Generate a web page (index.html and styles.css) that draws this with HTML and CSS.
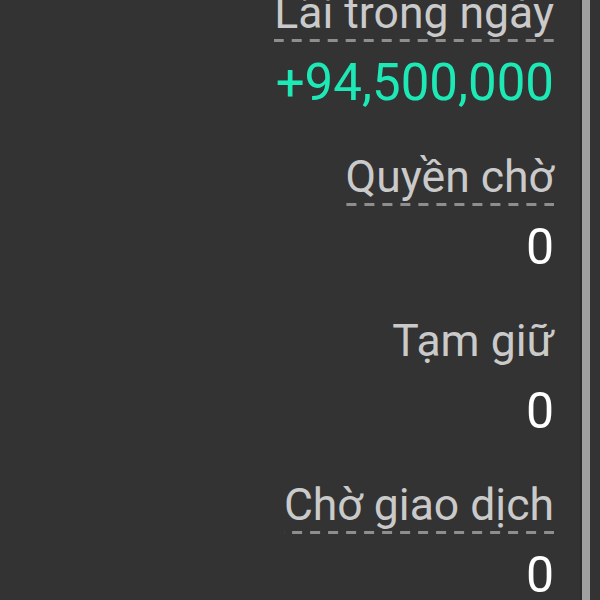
FILE: index.html
```html
<!DOCTYPE html>
<html lang="vi">
<head>
<meta charset="utf-8">
<title>Tài khoản</title>
<link rel="stylesheet" href="styles.css">
</head>
<body>
<div class="screen">
  <div class="list">
    <div class="item">
      <span class="label dashed">Lãi trong ngày</span>
      <div class="value up">+94,500,000</div>
    </div>
    <div class="item">
      <span class="label dashed">Quyền chờ</span>
      <div class="value">0</div>
    </div>
    <div class="item">
      <span class="label">Tạm giữ</span>
      <div class="value">0</div>
    </div>
    <div class="item">
      <span class="label dashed">Chờ giao dịch</span>
      <div class="value">0</div>
    </div>
  </div>
  <div class="scrollbar"></div>
</div>
</body>
</html>
```
FILE: styles.css
```css
html, body {
  margin: 0;
  padding: 0;
  height: 100%;
  background: #333333;
  overflow: hidden;
}
body {
  font-family: Roboto, "Noto Sans", sans-serif;
}
.screen {
  display: flex;
  height: 600px;
}
.list {
  flex: 1;
  display: flex;
  flex-direction: column;
  align-items: flex-end;
  gap: 40px;
  margin-top: -13px;
  padding-right: 26px;
}
.item {
  display: flex;
  flex-direction: column;
  align-items: flex-end;
}
.label {
  display: inline-block;
  font-size: 44.5px;
  line-height: 52px;
  padding-bottom: 3px;
  color: #cacaca;
  margin-bottom: 13px;
  white-space: nowrap;
}
.label.dashed {
  background-image: linear-gradient(to right, transparent 8px, #8e8e8e 8px);
  background-size: 18px 3px;
  background-repeat: repeat-x;
  background-position: right bottom;
}
.value {
  font-size: 50px;
  line-height: 56px;
  color: #ffffff;
  white-space: nowrap;
}
.value.up {
  font-size: 51px;
  color: #1de9b6;
}
.scrollbar {
  width: 8px;
  margin-right: 10px;
  background: #a0a0a0;
  border-left: 2px solid #2c2c2c;
}
```
